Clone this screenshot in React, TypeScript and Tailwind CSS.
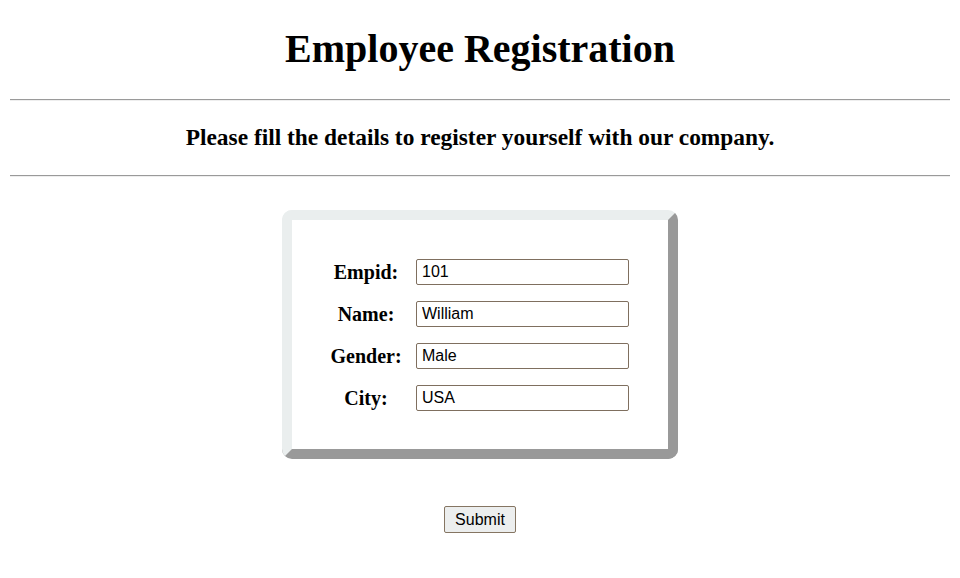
export default function App() {
  const fields = [
    { label: "Empid:", value: "101" },
    { label: "Name:", value: "William" },
    { label: "Gender:", value: "Male" },
    { label: "City:", value: "USA" },
  ];

  return (
    <div className="min-h-[578px] w-[960px] bg-white text-black font-['Liberation_Serif',_'Times_New_Roman',_serif]">
      <h1 className="pt-[26px] text-center text-[40px] leading-[46px] font-bold">
        Employee Registration
      </h1>
      <div className="mx-[10px] mt-[27px] h-0 border-t border-b border-t-[#9a9a9a] border-b-[#eeeeee]" />
      <h3 className="mt-[23px] mb-[24px] text-center text-[23.4px] leading-[27px] font-bold">
        Please fill the details to register yourself with our company.
      </h3>
      <div className="mx-[10px] h-0 border-t border-b border-t-[#9a9a9a] border-b-[#eeeeee]" />

      <div className="mt-[33px] flex justify-center">
        <div className="rounded-[10px] border-[10px] border-t-[#eaeeee] border-l-[#eaeeee] border-r-[#999999] border-b-[#999999] pt-[39px] pb-[38px] pl-[38px] pr-[39px]">
          <div className="grid grid-cols-[72px_213px] gap-x-[14px] gap-y-[16px]">
            {fields.map((f) => (
              <div key={f.label} className="contents">
                <label className="flex h-[26px] items-center justify-center text-[20px] leading-[23px] font-bold">
                  {f.label}
                </label>
                <input
                  defaultValue={f.value}
                  className="h-[26px] w-[213px] rounded-[2px] border border-[#7f6f5f] bg-white pl-[5px] text-[16px] leading-[18px] text-black outline-none font-['Liberation_Sans',_Arial,_sans-serif]"
                />
              </div>
            ))}
          </div>
        </div>
      </div>

      <div className="mt-[47px] flex justify-center">
        <button className="h-[27px] w-[72px] rounded-[2px] border border-[#857562] bg-[#eceeee] text-[16px] leading-[18px] text-black font-['Liberation_Sans',_Arial,_sans-serif]">
          Submit
        </button>
      </div>
    </div>
  );
}
